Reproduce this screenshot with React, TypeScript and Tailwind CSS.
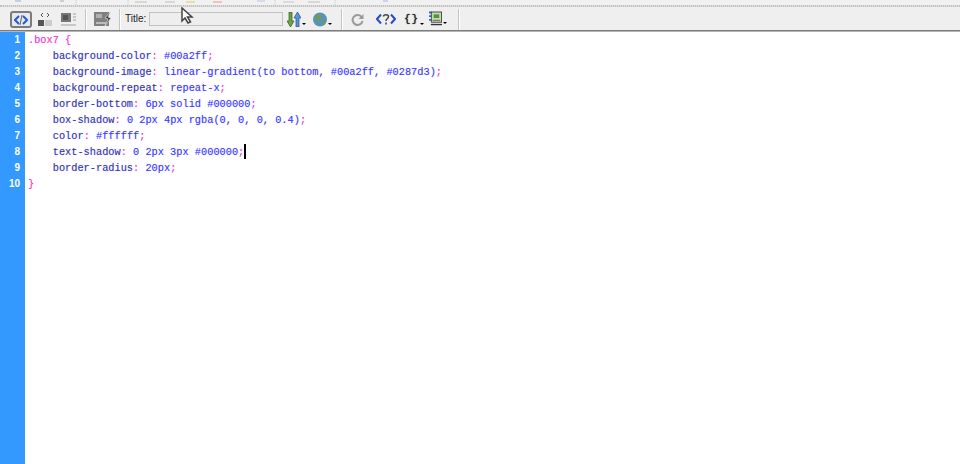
import { ReactNode } from "react";

const PINK = "text-[#ff33cc]";
const NAVY = "text-[#3333aa]";
const BLUE = "text-[#3a3aff]";

const rules: [string, string][] = [
  ["background-color", "#00a2ff"],
  ["background-image", "linear-gradient(to bottom, #00a2ff, #0287d3)"],
  ["background-repeat", "repeat-x"],
  ["border-bottom", "6px solid #000000"],
  ["box-shadow", "0 2px 4px rgba(0, 0, 0, 0.4)"],
  ["color", "#ffffff"],
  ["text-shadow", "0 2px 3px #000000"],
  ["border-radius", "20px"],
];

function Line({ children }: { children: ReactNode }) {
  return <div className="h-4 whitespace-pre leading-4">{children}</div>;
}

function Caret() {
  return <span className="inline-block w-0 h-[15px] align-top border-l-[2px] border-black" />;
}

function CodeView() {
  return (
    <div className="flex-1 pl-[3px] text-[10.3px] font-['Liberation_Mono',monospace] [text-shadow:0_0_1px_rgba(80,80,255,0.4)]">
      <Line><span className={PINK}>.box7 {"{"}</span></Line>
      {rules.map(([prop, val], i) => (
        <Line key={prop}>
          <span className={NAVY}>{"    " + prop}</span>
          <span className={PINK}>: </span>
          <span className={BLUE}>{val}</span>
          <span className={PINK}>;</span>
          {i === 6 && <Caret />}
        </Line>
      ))}
      <Line><span className={PINK}>{"}"}</span></Line>
    </div>
  );
}

function Gutter() {
  return (
    <div className="w-[25px] shrink-0 bg-[#3399ff] text-white text-[10px] font-bold font-['Liberation_Sans',sans-serif] text-right pr-[5px]">
      {Array.from({ length: 10 }, (_, i) => (
        <div key={i} className="h-4 leading-4">{i + 1}</div>
      ))}
    </div>
  );
}

function Divider() {
  return <div className="self-end w-px h-[21px] bg-[#c4c4c4] border-r border-white box-content" />;
}

function Arrow() {
  return <span className="self-end mb-[2px] ml-[1px] w-0 h-0 border-x-[2px] border-t-[2px] border-x-transparent border-t-black" />;
}

function SplitIcon() {
  return (
    <svg className="block" width="14" height="16" viewBox="0 0 14 16">
      <path d="M5 1 3 3l2 2M9 1l2 2-2 2" fill="none" stroke="#555" strokeWidth="1" />
      <rect x="0" y="8" width="6" height="6" fill="#555" />
      <path d="M7 9h7M7 11h7M7 13h7" stroke="#aaa" strokeWidth="1" />
    </svg>
  );
}

function DesignIcon() {
  return (
    <svg className="block" width="16" height="16" viewBox="0 0 16 16">
      <rect x="0" y="1" width="10" height="9" fill="#777" />
      <rect x="2" y="3" width="5" height="5" fill="#555" />
      <path d="M12 2h3M12 5h3M12 8h3M0 13h15" stroke="#bbb" strokeWidth="1.500" />
    </svg>
  );
}

function LiveIcon() {
  return (
    <svg className="block" width="18" height="17" viewBox="0 0 18 17">
      <rect x="0" y="1" width="15" height="14" fill="#808080" />
      <rect x="2" y="3" width="6" height="4" fill="#b0b0b0" />
      <path d="M2 12h10" stroke="#d0d0d0" strokeWidth="1.500" />
      <path d="M17 0 11 7l3 1-3 7 6-8-3-1z" fill="#444" stroke="#eee" strokeWidth="0.600" />
    </svg>
  );
}

function TransferIcon() {
  return (
    <svg className="block" width="14" height="15" viewBox="0 0 14 15">
      <path d="M2 0h3v9h2l-3.500 6L0 9h2z" fill="#6aa544" stroke="#2f5a1e" strokeWidth="0.700" />
      <path d="M9 15h3V6h2l-3.500-6L7 6h2z" fill="#5d93d8" stroke="#274f86" strokeWidth="0.700" />
    </svg>
  );
}

function GlobeIcon() {
  return (
    <svg className="block" width="14" height="15" viewBox="0 0 14 15">
      <circle cx="7" cy="7.500" r="7" fill="#5a93b8" />
      <path d="M2 5c2-3 5-3 6-1 1 2-1 2-1 4s-2 2-3 0-2-1-2-3zM9 9c2-1 4 0 3 2s-3 3-3 1z" fill="#6f9a5c" />
    </svg>
  );
}

function RefreshIcon() {
  return (
    <svg className="block" width="13" height="14" viewBox="0 0 13 14">
      <path d="M10.500 3.800A5 5 0 1 0 11.500 8" fill="none" stroke="#9a9a9a" strokeWidth="2" />
      <path d="M12.500 1v5h-5z" fill="#9a9a9a" />
    </svg>
  );
}

function ServerTagIcon() {
  return (
    <svg className="block" width="20" height="12" viewBox="0 0 20 12">
      <path d="M5 1.500 1 6l4 4.500M15 1.500 19 6l-4 4.500" fill="none" stroke="#2a4fc0" strokeWidth="2" />
      <path d="M7.500 3.500c0-2.500 5-2.500 5 0S10 5.500 10 8M10 9.500v2" fill="none" stroke="#444" strokeWidth="1.500" />
    </svg>
  );
}

function PageIcon() {
  return (
    <svg className="block" width="14" height="15" viewBox="0 0 14 15">
      <path d="M0 0h3v2H0zM0 4h3v2H0zM0 8h3v2H0z" fill="#2f6fd0" />
      <rect x="2.500" y="0.500" width="11" height="11" fill="#c8d8b0" stroke="#444" />
      <rect x="5" y="3" width="6" height="4" fill="#4a9a3a" />
      <path d="M4 9.500h8" stroke="#666" />
      <path d="M2 14h12" stroke="#333" strokeWidth="1.500" />
    </svg>
  );
}

// bits of the row above, cut off by the top edge of the capture
function ClippedRow() {
  return (
    <svg className="block" width="960" height="5" viewBox="0 0 960 5">
      <rect x="15" y="0" width="6" height="2" fill="#c5cfe2" />
      <rect x="60" y="0" width="4" height="2" fill="#cfcfcf" />
      <path d="M76 0v5M128 0v5M275 0v5M335 0v5" stroke="#c8c8c8" strokeDasharray="1 1" />
      <rect x="135" y="1" width="12" height="2" fill="#d8d8d8" />
      <rect x="165" y="1" width="10" height="2" fill="#d8d8d8" />
      <rect x="186" y="1" width="9" height="2" fill="#e8dcb0" />
      <rect x="213" y="1" width="9" height="2" fill="#ecc4bc" />
      <rect x="257" y="0" width="8" height="2" fill="#d4dcec" />
      <rect x="283" y="1" width="11" height="2" fill="#dcdcdc" />
      <rect x="308" y="1" width="12" height="2" fill="#d8d8d8" />
      <rect x="383" y="0" width="5" height="2" fill="#d4cef0" />
    </svg>
  );
}

function Toolbar() {
  return (
    <div className="h-[23px] flex items-center bg-[#efefef] pl-[10px]">
      <div className="w-[22px] h-[17px] mt-[2px] mr-[6px] flex items-center justify-center border-2 border-[#7c7c7c] rounded-[3px] bg-[#e4e8f0]">
        <svg className="block" width="14" height="12" viewBox="0 0 14 12">
          <path d="M5 2 1 6l4 4M9 2l4 4-4 4" fill="none" stroke="#2a5cc8" strokeWidth="2" />
          <path d="M8 1 6 11" stroke="#444" strokeWidth="0.800" />
        </svg>
      </div>
      <div className="mt-[2px] mr-[9px]"><SplitIcon /></div>
      <div className="mt-[2px] mr-[8px]"><DesignIcon /></div>
      <Divider />
      <div className="mt-[2px] ml-[7px] mr-[7px]"><LiveIcon /></div>
      <Divider />
      <span className="w-[21px] ml-[4px] mr-[3px] text-[10px] font-medium text-[#222] font-['Liberation_Sans',sans-serif]">Title:</span>
      <div className="w-[134px] h-[14px] mr-[4px] border border-[#c2c2c2] bg-[#eeeeee]" />
      <div className="flex mt-[2px] mr-[7px]"><TransferIcon /><Arrow /></div>
      <div className="flex mt-[2px] mr-[9px]"><GlobeIcon /><Arrow /></div>
      <Divider />
      <div className="mt-[2px] ml-[8px] mr-[12px]"><RefreshIcon /></div>
      <div className="mt-[1px] mr-[8px]"><ServerTagIcon /></div>
      <div className="flex w-[16px] mr-[9px] mt-[1px]">
        <span className="text-[11px] leading-4 tracking-[1px] text-[#222] font-['Liberation_Mono',monospace] [text-shadow:0_0_1px_#222]">{"{}"}</span>
        <Arrow />
      </div>
      <div className="flex w-[18px] mr-[11px]"><PageIcon /><Arrow /></div>
      <Divider />
    </div>
  );
}

function Cursor() {
  return (
    <svg className="absolute left-[181px] top-[7px]" width="14" height="18" viewBox="0 0 14 18">
      <path d="M1 1v13l3-3 3 5 2.500-1-3-5h4.500z" fill="#fff" stroke="#444" strokeWidth="1.500" />
    </svg>
  );
}

export default function App() {
  return (
    <div className="relative w-[960px] h-[464px] overflow-hidden flex flex-col bg-white">
      <div className="h-[5px] bg-[#f1f1f1]"><ClippedRow /></div>
      <div className="h-[2px] border-y border-dotted border-[#c4c4c4] bg-[#dcdcdc]" />
      <Toolbar />
      <div className="h-[2px] bg-[#7d7d7d] border-b border-[#b5b5b5]" />
      <div className="flex flex-1 min-h-0">
        <Gutter />
        <CodeView />
      </div>
      <Cursor />
    </div>
  );
}
